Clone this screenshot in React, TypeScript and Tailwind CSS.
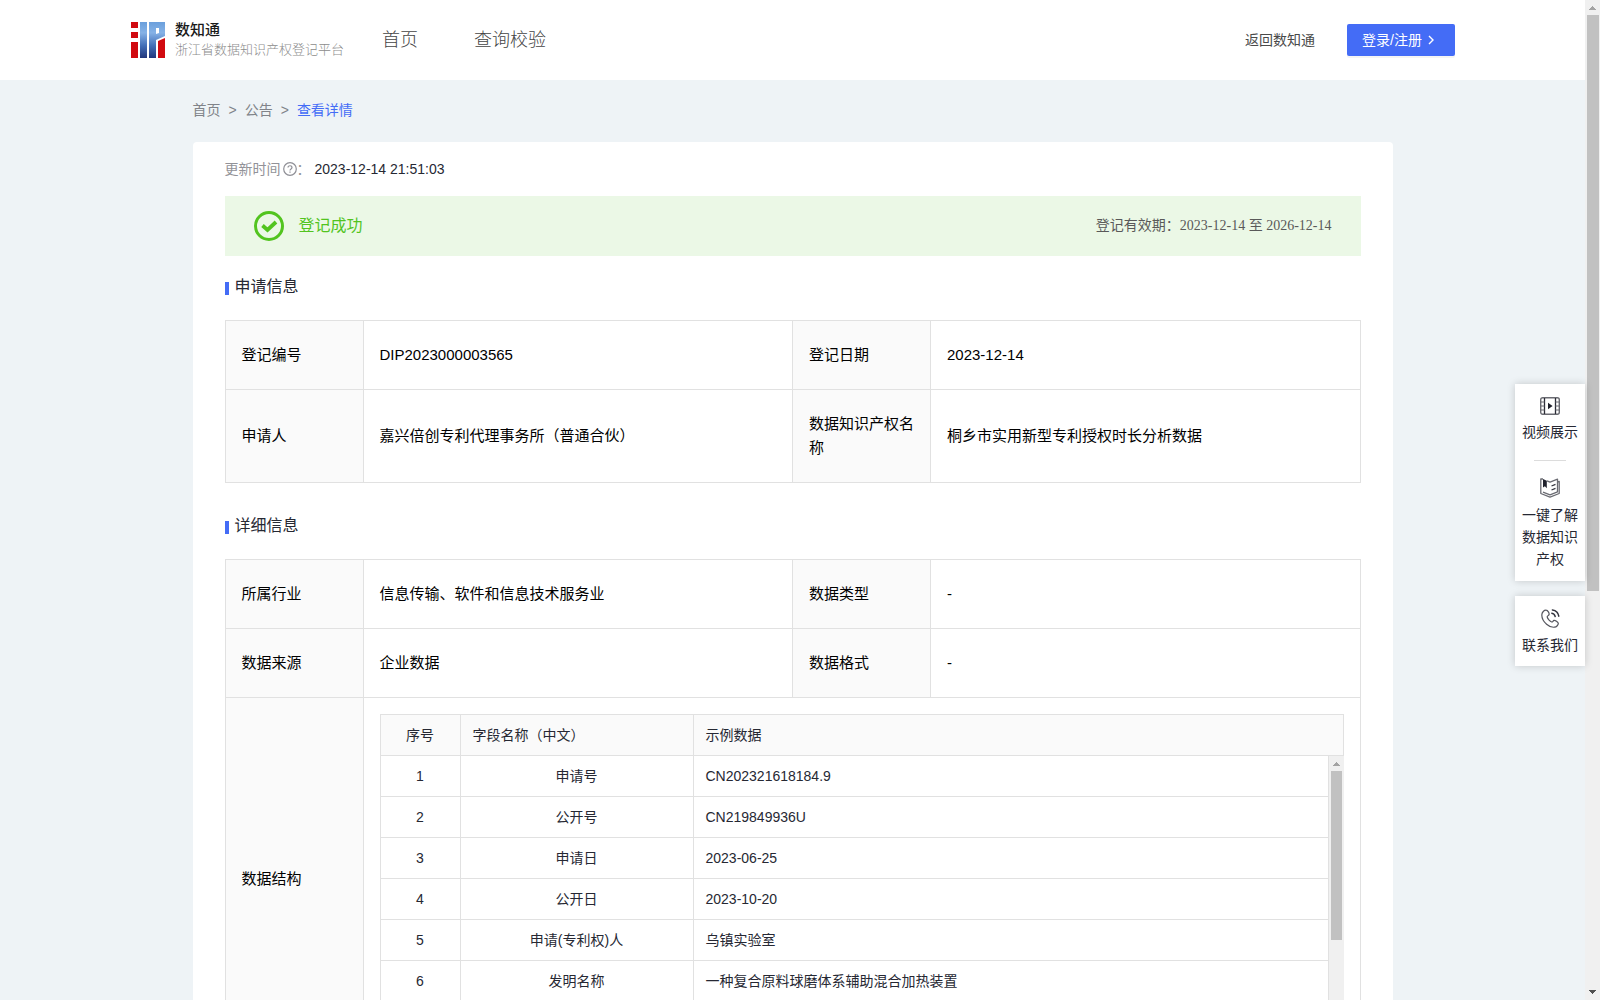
import React from "react";

const structureRows = [
  ["1", "申请号", "CN202321618184.9"],
  ["2", "公开号", "CN219849936U"],
  ["3", "申请日", "2023-06-25"],
  ["4", "公开日", "2023-10-20"],
  ["5", "申请(专利权)人", "乌镇实验室"],
  ["6", "发明名称", "一种复合原料球磨体系辅助混合加热装置"],
];

function Logo() {
  return (
    <svg width="34" height="36" viewBox="0 0 34 36" aria-hidden="true">
      <defs>
        <linearGradient id="logo-blue" x1="0" y1="0" x2="0" y2="36" gradientUnits="userSpaceOnUse">
          <stop offset="0" stopColor="#6a9fdc" />
          <stop offset="0.3" stopColor="#86b2e6" />
          <stop offset="0.65" stopColor="#4470b8" />
          <stop offset="1" stopColor="#22377c" />
        </linearGradient>
      </defs>
      <path fill="#d10a10" d="M0 0h7v6H0zM0 10h7v6H0zM0 20h7v16H0zM27 19l7-3v20h-7z" />
      <path fill="url(#logo-blue)" d="M9 0h7v36H9z" />
      <path fill="url(#logo-blue)" fillRule="evenodd" d="M18 0h16v14l-9 4v18h-7zM25 6v6l3-1V6z" />
    </svg>
  );
}

function Arrow({ down = false, dark = false }: { down?: boolean; dark?: boolean }) {
  return (
    <svg width="15" height="15" viewBox="0 0 15 15" shapeRendering="crispEdges" aria-hidden="true">
      <path d={down ? "M4 5h7L7.5 9z" : "M4 10h7L7.5 6z"} fill={dark ? "#505050" : "#a3a3a3"} />
    </svg>
  );
}

function VideoIcon() {
  return (
    <svg width="20" height="18" viewBox="0 0 20 18" fill="none" stroke="#6a6b72" aria-hidden="true">
      <rect x="0.7" y="0.7" width="18.6" height="16.6" rx="2" strokeWidth="1.4" />
      <path d="M4.5 1v16M15.5 1v16" stroke="#2a2b35" strokeWidth="1.3" />
      <path d="M1 5h3.5M1 9h3.5M1 13h3.5M15.5 5H19M15.5 9H19M15.5 13H19" />
      <path d="M8 5.8v6.4L12.6 9z" fill="#20212c" stroke="none" />
    </svg>
  );
}

function BookIcon() {
  return (
    <svg width="20" height="20" viewBox="0 0 20 20" fill="none" stroke="#6a6b72" strokeWidth="1.3" strokeLinejoin="round" aria-hidden="true">
      <path d="M3 1H.8v14.500L10 19.200l9.200-3.700V3.300l-1.700.6" />
      <path d="M7 2.800l3 1.400 7.500-3v12.600L10 16.800l-7-2.600" />
      <path d="M11.5 8l4-1.600M11.5 12l4-1.600" stroke="#33343e" />
      <path d="M3 1v8.600l1.900-1.400 1.900 2V2.700z" fill="#20212c" stroke="none" />
    </svg>
  );
}

function PhoneIcon() {
  return (
    <svg width="19" height="19" viewBox="0 0 19 19" fill="none" stroke="#55565e" strokeWidth="1.2" strokeLinecap="round" strokeLinejoin="round" aria-hidden="true">
      <path d="M5.2 1.2C3.200 1 .8 3.200.8 6c0 3.500 2 6.800 4.800 9.300C8 17.500 11 18.500 13.500 18.200c2-.2 4-2.400 3.800-3.900-.2-1.200-3.200-3.200-4.300-2.900-1 .3-1.300 1.800-2.300 1.600-1.700-.4-4.400-3.700-4.500-5.100-.1-1.100 1.600-1.300 1.900-2.400C8.400 4.300 6.800 1.300 5.200 1.200z" />
      <path d="M10.800 4.200c1.800.3 3 1.500 3.400 3.300M11.400.9c3.500.5 5.900 2.900 6.400 6.300" stroke="#33343e" strokeWidth="1.500" />
    </svg>
  );
}

function SectionTitle({ children, className }: { children: React.ReactNode; className: string }) {
  return (
    <h2 className={`flex items-center gap-1.5 text-[16px] leading-6 text-[#262833] ${className}`}>
      <span className="mt-0.5 h-[13px] w-1 bg-[#446cf6]" />
      {children}
    </h2>
  );
}

const cell = "border border-[#e1e1e1] px-4 py-[22px] text-left font-normal";
const label = "border border-[#e1e1e1] bg-[#fafafa] px-4 py-[22px] text-left font-normal";
const inner = "border-r border-b border-[#e1e1e1] px-3 py-[9px] font-normal";

function Row({ items }: { items: string[] }) {
  return (
    <tr>
      <th scope="row" className={label}>{items[0]}</th>
      <td className={cell}>{items[1]}</td>
      <th scope="row" className={label}>{items[2]}</th>
      <td className={cell}>{items[3]}</td>
    </tr>
  );
}

function InfoCols() {
  return (
    <colgroup>
      <col className="w-[138px]" />
      <col />
      <col className="w-[138px]" />
      <col />
    </colgroup>
  );
}

function InnerCols() {
  return (
    <colgroup>
      <col className="w-20" />
      <col className="w-[233px]" />
      <col />
    </colgroup>
  );
}

const infoTable = "w-full table-fixed border-collapse text-[15px] leading-6 text-black";
const innerTable = "w-full table-fixed border-separate border-spacing-0 border-l border-[#e1e1e1] text-sm leading-[22px] text-[#262833]";

function StructureTable() {
  return (
    <div>
      <table className={`${innerTable} border-t bg-[#fafafa]`}>
        <InnerCols />
        <thead>
          <tr>
            <th scope="col" className={`${inner} text-center`}>序号</th>
            <th scope="col" className={`${inner} text-left`}>字段名称（中文）</th>
            <th scope="col" className={`${inner} text-left`}>示例数据</th>
          </tr>
        </thead>
      </table>
      <div className="flex h-72 overflow-hidden">
        <div className="min-w-0 flex-1">
          <table className={innerTable}>
            <InnerCols />
            <tbody>
              {structureRows.map((r) => (
                <tr key={r[0]}>
                  <td className={`${inner} text-center`}>{r[0]}</td>
                  <td className={`${inner} text-center`}>{r[1]}</td>
                  <td className={`${inner} text-left`}>{r[2]}</td>
                </tr>
              ))}
            </tbody>
          </table>
        </div>
        <div className="flex w-[15px] flex-col bg-[#f0f0f0]">
          <Arrow />
          <div className="mx-0.5 h-[169px] bg-[#c1c1c1]" />
        </div>
      </div>
    </div>
  );
}

export default function App() {
  return (
    <div className="relative flex h-screen overflow-hidden bg-[#eef3f6] font-['Liberation_Sans','Noto_Sans_CJK_SC',sans-serif]">
      <div className="min-w-0 flex-1">
        <header className="h-20 bg-white">
          <div className="mx-auto flex h-full max-w-[1325px] items-center">
            <a href="#" className="flex items-center gap-2.5 pl-px">
              <Logo />
              <span className="flex flex-col">
                <span className="text-[15px] leading-5 font-medium text-[#1a1a1a]">数知通</span>
                <span className="text-[13px] leading-5 font-light text-[#8c8c8c]">浙江省数据知识产权登记平台</span>
              </span>
            </a>
            <nav className="ml-[38px] flex gap-14 text-[18px] leading-6 font-light text-[#444444]">
              <a href="#">首页</a>
              <a href="#">查询校验</a>
            </nav>
            <a href="#" className="ml-auto text-sm text-[#4a4a4a]">返回数知通</a>
            <button type="button" className="ml-8 flex h-8 w-[108px] items-center gap-1 rounded-xs bg-[#446cf6] pl-[15px] text-sm text-white shadow-[0_2px_0_rgba(0,0,0,0.045)]">
              登录/注册
              <svg width="10" height="10" viewBox="0 0 10 10" fill="none" stroke="currentColor" strokeWidth="1.4" aria-hidden="true">
                <path d="M3 1l4 4-4 4" />
              </svg>
            </button>
          </div>
        </header>

        <main className="mx-auto max-w-[1200px]">
          <nav aria-label="breadcrumb" className="flex gap-2 pt-[19px] pb-[21px] text-sm leading-[22px] text-[#808389]">
            <a href="#">首页</a>
            <span>&gt;</span>
            <a href="#">公告</a>
            <span>&gt;</span>
            <a href="#" className="text-[#446cf6]">查看详情</a>
          </nav>

          <div className="rounded-t bg-white px-8 pt-4 pb-8">
            <div className="mb-4 flex items-center text-sm leading-[22px] text-[#929298]">
              更新时间
              <svg className="ml-0.5" width="14" height="14" viewBox="0 0 14 14" fill="none" stroke="#8f8f96" strokeWidth="1.200" aria-hidden="true">
                <circle cx="7" cy="7" r="6.300" />
                <path d="M5 5.600c0-2.500 4-2.500 4 0C9 6.900 7 6.900 7 8.400M7 9.600v1.200" />
              </svg>
              ：<span className="ml-1 text-[#262833]">2023-12-14 21:51:03</span>
            </div>

            <div className="flex h-15 items-center bg-[#ebf8e6] pr-[29px] pl-[29px]">
              <svg width="30" height="30" viewBox="0 0 30 30" fill="none" stroke="#52c41f" aria-hidden="true">
                <circle cx="15" cy="15" r="13.500" strokeWidth="3" />
                <path d="M8.500 14.500l5 4.500 8.500-8" strokeWidth="3.800" />
              </svg>
              <span className="ml-[15px] text-[16px] text-[#52c41f]">登记成功</span>
              <span className="ml-auto font-['Liberation_Serif','Noto_Sans_CJK_SC',serif] text-sm text-[#595959]">
                登记有效期：2023-12-14 至 2026-12-14
              </span>
            </div>

            <SectionTitle className="mt-[19px] mb-[21px]">申请信息</SectionTitle>
            <table className={infoTable}>
              <InfoCols />
              <tbody>
                <Row items={["登记编号", "DIP2023000003565", "登记日期", "2023-12-14"]} />
                <Row items={["申请人", "嘉兴倍创专利代理事务所（普通合伙）", "数据知识产权名称", "桐乡市实用新型专利授权时长分析数据"]} />
              </tbody>
            </table>

            <SectionTitle className="mt-[31px] mb-[21px]">详细信息</SectionTitle>
            <table className={infoTable}>
              <InfoCols />
              <tbody>
                <Row items={["所属行业", "信息传输、软件和信息技术服务业", "数据类型", "-"]} />
                <Row items={["数据来源", "企业数据", "数据格式", "-"]} />
                <tr>
                  <th scope="row" className={label}>数据结构</th>
                  <td colSpan={3} className="border border-[#e1e1e1] p-4">
                    <StructureTable />
                  </td>
                </tr>
              </tbody>
            </table>
          </div>
        </main>
      </div>

      <aside className="absolute top-96 right-[15px] flex w-[70px] flex-col gap-[15px] text-center text-sm leading-[22px] text-[#262833]">
        <div className="flex flex-col items-center bg-white px-[7px] pt-[13px] pb-[11px] shadow-[0_0_8px_rgba(0,0,0,0.18)]">
          <a href="#" className="flex flex-col items-center gap-[6px]">
            <VideoIcon />
            视频展示
          </a>
          <hr className="my-[17px] w-8 border-t border-[#dcdcdc]" />
          <a href="#" className="flex flex-col items-center gap-[6px]">
            <BookIcon />
            一键了解数据知识产权
          </a>
        </div>
        <a href="#" className="flex flex-col items-center gap-[6px] bg-white px-[7px] pt-[13px] pb-[10px] shadow-[0_0_8px_rgba(0,0,0,0.18)]">
          <PhoneIcon />
          联系我们
        </a>
      </aside>

      <div className="flex w-[15px] flex-col bg-[#f0f0f0]">
        <Arrow />
        <div className="mr-px ml-0.5 h-[206px] grow-[370] bg-[#c1c1c1]" />
        <div className="grow-[394]" />
        <Arrow down dark />
      </div>
    </div>
  );
}
